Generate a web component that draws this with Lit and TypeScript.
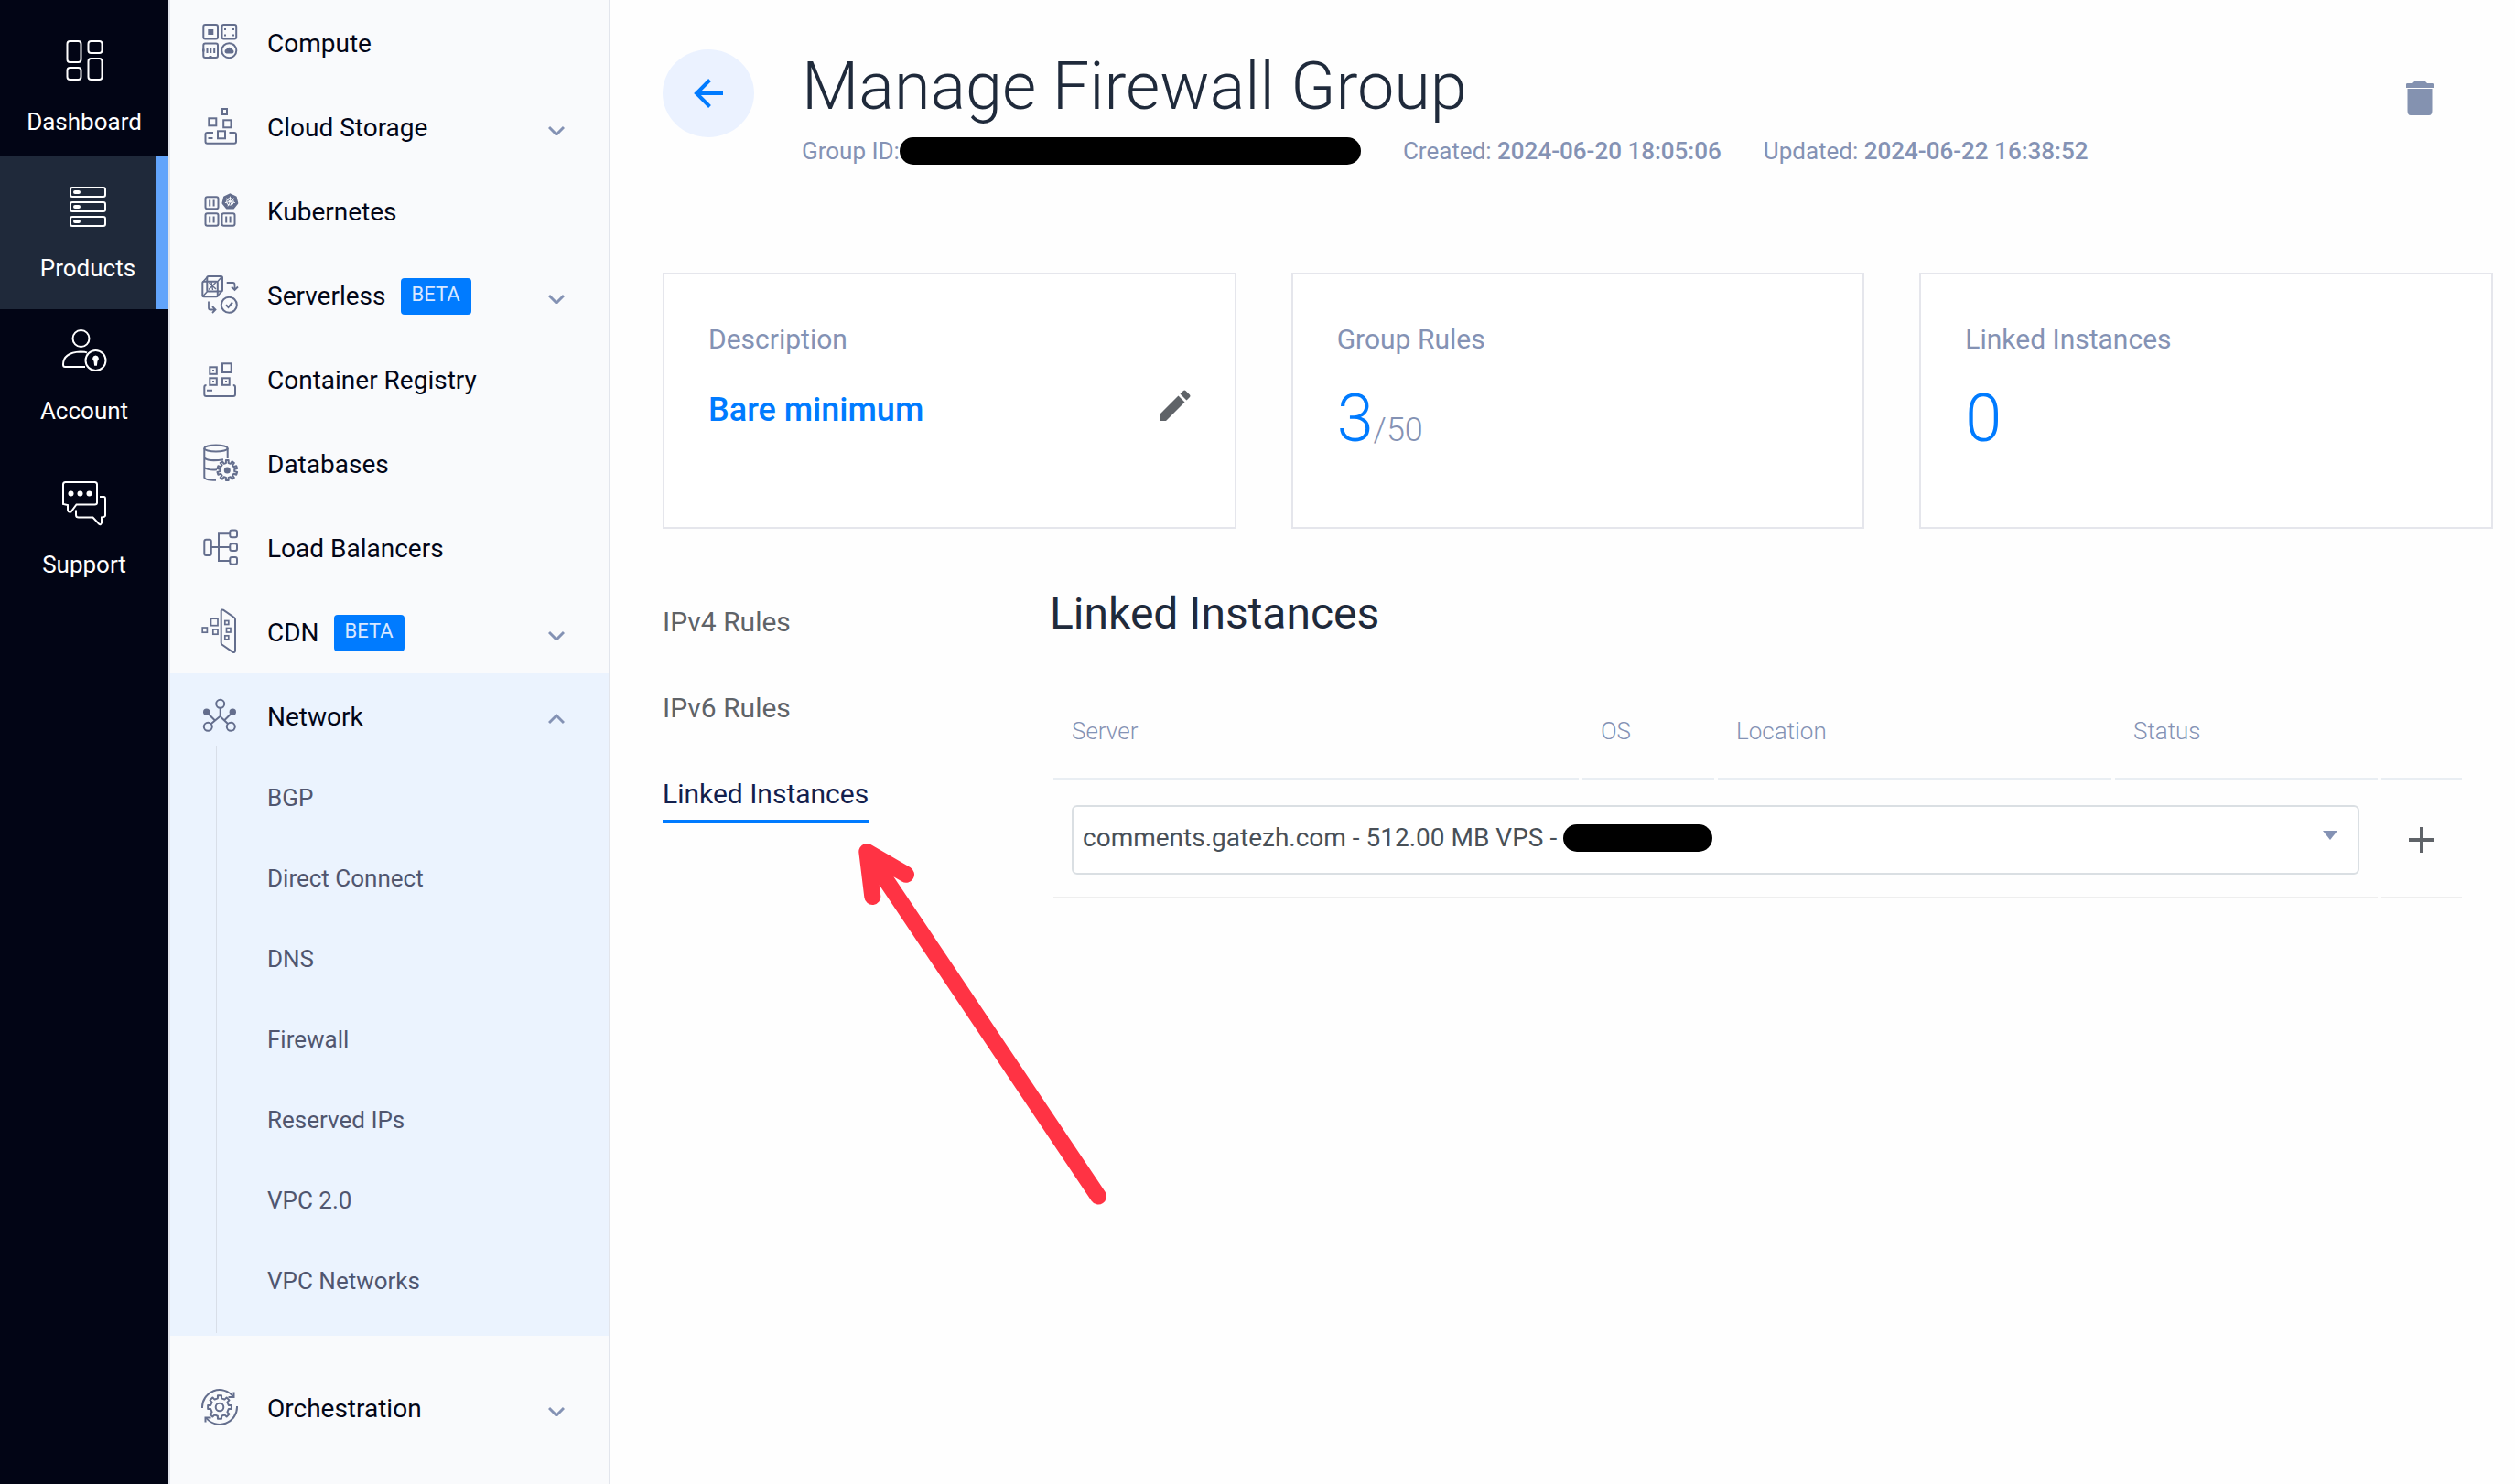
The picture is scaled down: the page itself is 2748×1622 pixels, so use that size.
import { LitElement, html, css, svg, nothing } from "lit";
import { customElement, property } from "lit/decorators.js";
import { classMap } from "lit/directives/class-map.js";

/** Outline of a toothed wheel, as path data. */
function gear(cx: number, cy: number, outer: number, inner: number, teeth: number): string {
  const step = (Math.PI * 2) / teeth;
  const at = (r: number, a: number) =>
    `${(cx + r * Math.sin(a)).toFixed(2)} ${(cy - r * Math.cos(a)).toFixed(2)}`;
  const points: string[] = [];
  for (let i = 0; i < teeth; i++) {
    const a = i * step;
    points.push(
      at(inner, a - step * 0.27),
      at(outer, a - step * 0.2),
      at(outer, a + step * 0.2),
      at(inner, a + step * 0.27),
    );
  }
  return `M${points.join("L")}Z`;
}

const railIcons = {
  dashboard: svg`
    <rect x="5.5" y="3" width="15" height="23" rx="3"/>
    <rect x="28.5" y="3" width="15" height="13" rx="3"/>
    <rect x="5.5" y="32" width="15" height="13" rx="3"/>
    <rect x="28.5" y="22" width="15" height="23" rx="3"/>`,
  products: svg`
    <rect x="5" y="3" width="38" height="10" rx="2"/>
    <rect x="5" y="19" width="38" height="10" rx="2"/>
    <rect x="5" y="35" width="38" height="10" rx="2"/>
    <path d="M10 8h4M10 24h4M10 40h4" stroke-width="4" stroke-linecap="round"/>`,
  account: svg`
    <circle cx="20.500" cy="12" r="9"/>
    <path d="M25 43H3C1.500 43 1 42 1 40.500C1 31 8 27 20 26.500C24 26.600 26 27 27 27.500"/>
    <circle cx="36.500" cy="36" r="11"/>
    <path d="M36.500 30.500a3.500 3.500 0 0 1 2 6.300l-.6 5h-2.800l-.6-5a3.500 3.500 0 0 1 2-6.300z" fill="currentColor" stroke="none"/>`,
  support: svg`
    <path d="M3.500 1H35.500Q38 1 38 3.500V23.500Q38 25.500 35.500 25.500H15.500L9.500 33.500Q6 34 6 31V26L1 25V3.500Q1 1 3.500 1Z"/>
    <path d="M41 17H45.500Q47 17 47 19V37.500Q47 39 43 39.500V45.500Q42 48.500 40 46.500L33.500 39.500H18Q15 39.500 15 37V31.500"/>
    <g fill="currentColor" stroke="none"><circle cx="9.500" cy="13.500" r="3"/><circle cx="19.500" cy="13.500" r="3"/><circle cx="29.500" cy="13.500" r="3"/></g>`,
};

const spokes = Array.from({ length: 7 }, (_, i) => {
  const a = (i * Math.PI * 2) / 7;
  return `M35.400 16.300L${(35.4 + 5.6 * Math.sin(a)).toFixed(2)} ${(16.3 - 5.6 * Math.cos(a)).toFixed(2)}`;
}).join("");

const navIcons = {
  compute: svg`
    <rect x="6.300" y="7" width="15.700" height="15.500" rx="2"/>
    <rect x="26.500" y="7" width="15.700" height="15.500" rx="2"/>
    <rect x="6.300" y="27.500" width="15.700" height="15.500" rx="2"/>
    <ellipse cx="34.300" cy="35.200" rx="8" ry="8"/>
    <path d="M11.300 12h6v6h-6zM29 11h2v2h-2zM38 11h2v2h-2zM29 17.500h2v2h-2zM38 17.500h2v2h-2zM5 33.500h2.500v3H5zM12.500 41h3v3h-3z" fill="currentColor" stroke="none"/>
    <path d="M10.500 32v6M14.300 32v6M18.200 32v6"/>
    <path d="M31.500 38.500a2.400 2.400 0 0 1-.2-4.700 3.400 3.400 0 0 1 6.400.3 2.300 2.300 0 0 1 .3 4.400z" fill="currentColor" stroke="none"/>`,
  storage: svg`
    <rect x="27" y="7" width="5" height="6"/>
    <rect x="12.300" y="17.300" width="8" height="8"/>
    <rect x="28.200" y="19.300" width="8.300" height="8"/>
    <rect x="22" y="31.300" width="8" height="8"/>
    <path d="M17 33H10.500Q8.500 33 8.500 35V42.700Q8.500 44.700 10.500 44.700H40Q42 44.700 42 42.700V35Q42 33 40 33H34.500M11.500 39h5"/>`,
  kubernetes: svg`
    <rect x="8.500" y="11.300" width="14" height="13" rx="2"/>
    <rect x="8.500" y="29.300" width="14" height="13.500" rx="2"/>
    <rect x="26.500" y="29.300" width="14" height="13.500" rx="2"/>
    <path d="M13.200 14.500v7M17.600 14.500v7M13.200 32.500v7M17.600 32.500v7M31.200 32.500v7M35.600 32.500v7"/>
    <path d="M35.400 8.300l6.300 3 1.600 6.800-4.400 5.500h-7l-4.400-5.500 1.600-6.800z" fill="currentColor" stroke="currentColor" stroke-linejoin="round"/>
    <g class="cut"><circle cx="35.400" cy="16.300" r="3.800"/><path d="${spokes}"/></g>`,
  serverless: svg`
    <rect x="5.300" y="11.700" width="16.500" height="16.500" rx="1.500"/>
    <rect x="10.300" y="6" width="16.700" height="16.500" rx="1.500"/>
    <path d="M5.800 12l5-5.500M21.500 12l5-5.500M21.500 27.800l5-5.500M5.800 27.800l5-5.500" stroke-width="1.600"/>
    <path d="M12.500 13l7.500 7M20 12.500l-8 8M15 12l1.500 9" stroke-width="1.400"/>
    <path d="M31.700 13H38.500Q40.500 13 40.500 15V20.500M37 17.500L40.500 21L44 17.500" stroke-width="1.800"/>
    <path d="M12 33.500V40.500Q12 42.500 14 42.500H19M16 39L19.500 42.500L16 46" stroke-width="1.800"/>
    <circle cx="34.300" cy="37.300" r="8.500"/>
    <path d="M31 37.300l2.500 2.700 4.500-5.500"/>`,
  registry: svg`
    <rect x="13.300" y="13.300" width="7.500" height="7.500"/>
    <rect x="27" y="9.300" width="9.700" height="9.700"/>
    <rect x="13.300" y="25.300" width="7.500" height="7.500"/>
    <rect x="27" y="25.300" width="7.700" height="7.500"/>
    <path d="M16 16h2v2h-2zM16 28h2v2h-2zM30 28h2v2h-2z" fill="currentColor" stroke="none"/>
    <path d="M9.500 33Q7.300 33 7.300 35V43Q7.300 45 9.300 45H39Q41 45 41 43V35Q41 33 38.800 33M10 38.700h6"/>`,
  databases: svg`
    <ellipse cx="20" cy="10" rx="12.700" ry="3.500"/>
    <path d="M7.300 10V41.500C7.300 43.500 12 44.800 20 44.800M32.700 10V21M7.300 20.500C10 23 18 24 28 22.200M7.300 31C10 33 16 33.800 21 33.300"/>
    <path d="${gear(32.3, 34, 11, 8, 10)}" stroke-linejoin="round"/>
    <circle cx="32.300" cy="34" r="3.500" fill="currentColor" stroke="none"/>`,
  balancers: svg`
    <rect x="7.300" y="17.700" width="7.500" height="17.300" rx="2"/>
    <rect x="35.300" y="7.500" width="7.700" height="7.700" rx="2"/>
    <rect x="35.300" y="22.200" width="7.700" height="7.700" rx="2"/>
    <rect x="35.300" y="37" width="7.700" height="7.700" rx="2"/>
    <path d="M15 26H35M35 11.300H23V41H35"/>`,
  cdn: svg`
    <path d="M25.700 3.500Q26.200 2 28 2.700L40 11Q41 11.700 41 13V47.500Q40.500 49.700 38.500 48.800L26.500 40.500Q25.700 39.800 25.700 38.500Z"/>
    <g stroke-width="1.700">
      <rect x="5.200" y="22" width="5.200" height="5.200"/>
      <rect x="14.500" y="12.200" width="7.500" height="7.500"/>
      <rect x="16.800" y="24" width="5.200" height="5.200"/>
      <rect x="29.800" y="14.500" width="4" height="4"/>
      <rect x="31.500" y="22.500" width="4.500" height="4.500"/>
      <rect x="29.800" y="30.800" width="4" height="4"/>
    </g>`,
  network: svg`
    <circle cx="24.700" cy="13.300" r="4.500"/>
    <circle cx="11.300" cy="38.300" r="4.500"/>
    <circle cx="36.300" cy="38.300" r="4.500"/>
    <circle cx="9.700" cy="22.300" r="3.700" fill="currentColor" stroke="none"/>
    <circle cx="38.300" cy="22.300" r="3.700" fill="currentColor" stroke="none"/>
    <path d="M24.700 18V26.700L14.800 35M25.500 28L33 35M10 22.500L18.700 31.300M38 22.500L29.500 31"/>`,
  orchestration: svg`
    <path d="${gear(24, 26, 13, 10, 8)}" stroke-linejoin="round"/>
    <circle cx="24" cy="26" r="4.300"/>
    <path d="M5 27A19 19 0 0 1 39 14.500M43 25A19 19 0 0 1 9 37.500"/>
    <path d="M39.500 9.500V15H33.500M8.500 42.500V37.500H14.500"/>`,
};

type NavItem = {
  label: string;
  icon: keyof typeof navIcons;
  beta?: boolean;
  menu?: boolean;
  children?: string[];
};

const navItems: NavItem[] = [
  { label: "Compute", icon: "compute" },
  { label: "Cloud Storage", icon: "storage", menu: true },
  { label: "Kubernetes", icon: "kubernetes" },
  { label: "Serverless", icon: "serverless", beta: true, menu: true },
  { label: "Container Registry", icon: "registry" },
  { label: "Databases", icon: "databases" },
  { label: "Load Balancers", icon: "balancers" },
  { label: "CDN", icon: "cdn", beta: true, menu: true },
  {
    label: "Network",
    icon: "network",
    menu: true,
    children: ["BGP", "Direct Connect", "DNS", "Firewall", "Reserved IPs", "VPC 2.0", "VPC Networks"],
  },
  { label: "Orchestration", icon: "orchestration", menu: true },
];

const reset = css`
  *, *::before, *::after { box-sizing: border-box; }
  ul, h1, h2, p { margin: 0; padding: 0; }
  ul { list-style: none; }
  h1, h2 { font-weight: 400; }
  a { color: inherit; text-decoration: none; }
  svg { display: block; flex: none; }
  button { margin: 0; padding: 0; border: 0; background: none; color: inherit; font: inherit; cursor: pointer; }
`;

@customElement("main-rail")
class MainRail extends LitElement {
  static styles = [reset, css`
    :host { display: block; width: 184px; flex: none; background: #020515; color: #fff; }
    .item {
      display: flex; flex-direction: column; align-items: center; gap: 28px;
      padding: 32px 0 30px; font-size: 26px; line-height: 30px;
    }
    .item.first { padding: 42px 0 22px; }
    .item.active { padding-left: 22px; border-right: 14px solid #62a4fb; background: #1f293a; }
    .item.after { padding-top: 20px; }
    .icon { width: 48px; height: 48px; fill: none; stroke: currentColor; stroke-width: 2; overflow: visible; }
  `];

  render() {
    const items = [
      { label: "Dashboard", icon: railIcons.dashboard, cls: { first: true } },
      { label: "Products", icon: railIcons.products, cls: { active: true } },
      { label: "Account", icon: railIcons.account, cls: { after: true } },
      { label: "Support", icon: railIcons.support, cls: {} },
    ];
    return html`<nav>
      ${items.map((item) => html`
        <a class=${classMap({ item: true, ...item.cls })} href="#">
          <svg class="icon" viewBox="0 0 48 48" aria-hidden="true">${item.icon}</svg>
          <span>${item.label}</span>
        </a>`)}
    </nav>`;
  }
}

@customElement("product-nav")
class ProductNav extends LitElement {
  static styles = [reset, css`
    :host {
      display: block; width: 482px; flex: none; background: #f9fafc; color: #020617;
      border-left: 2px solid #e2e5ec; border-right: 1px solid #e2e5ec;
    }
    .link {
      display: flex; align-items: center; gap: 28px; height: 92px;
      padding: 0 48px 0 30px; font-size: 28px; line-height: 36px;
    }
    .icon { width: 48px; height: 52px; fill: none; stroke: currentColor; stroke-width: 2; color: #646e8d; }
    .cut { stroke: #f9fafc; stroke-width: 1; }
    .label { display: flex; align-items: center; gap: 16px; flex: 1; padding-top: 4px; }
    .badge {
      padding: 0 12px 4px; border-radius: 4px; background: #007bff; color: #d9e8ff;
      font-size: 22px; line-height: 36px;
    }
    .chevron { width: 18px; height: 20px; fill: none; stroke: #8492b4; stroke-width: 3; }
    .open { background: #ebf3fe; padding-bottom: 3px; margin-bottom: 32px; }
    .sub { margin: -13px 0 0 50px; padding: 13px 0; border-left: 1px solid #d8dee8; }
    .child {
      display: block; padding-left: 55px; color: #50566f;
      font-size: 26px; line-height: 88px;
    }
  `];

  render() {
    return html`<nav><ul>${navItems.map((item) => html`
      <li class=${classMap({ open: !!item.children })}>
        <a class="link" href="#">
          <svg class="icon" viewBox="0 0 48 52" aria-hidden="true">${navIcons[item.icon]}</svg>
          <span class="label">
            <span>${item.label}</span>
            ${item.beta ? html`<span class="badge">BETA</span>` : nothing}
          </span>
          ${item.menu
            ? html`<svg class="chevron" viewBox="0 0 18 20" aria-hidden="true">
                <path d=${item.children ? "M1 18L9 10L17 18" : "M1 11L9 19L17 11"}></path>
              </svg>`
            : nothing}
        </a>
        ${item.children
          ? html`<ul class="sub">${item.children.map((c) => html`<li><a class="child" href="#">${c}</a></li>`)}</ul>`
          : nothing}
      </li>`)}</ul></nav>`;
  }
}

@customElement("stat-card")
class StatCard extends LitElement {
  static styles = [reset, css`
    :host { display: block; height: 280px; padding: 53px 48px; border: 2px solid #e5e6ec; background: #fff; }
    .title { color: #8492b4; font-size: 30px; line-height: 36px; margin-bottom: 33px; }
  `];

  @property() label = "";

  render() {
    return html`<p class="title">${this.label}</p><slot></slot>`;
  }
}

@customElement("linked-instances")
class LinkedInstances extends LitElement {
  static styles = [reset, css`
    :host { display: block; flex: 1; min-width: 0; }
    .heading { color: #1f2a3b; font-size: 48px; line-height: 56px; margin-bottom: 45px; }
    .table { width: 100%; table-layout: fixed; border-collapse: separate; border-spacing: 4px; }
    .server { width: 574px; }
    .os { width: 144px; }
    .location { width: 430px; }
    .status { width: 287px; }
    .action { width: 88px; }
    .head {
      padding: 35px 20px; border-bottom: 2px solid #e9eef3; text-align: left;
      color: #8492b4; font-size: 26px; line-height: 32px; font-weight: 300;
    }
    .cell { padding: 24px 20px; border-bottom: 2px solid #eeeeee; }
    .cell.last { padding: 24px 0; }
    .picker { position: relative; }
    .select {
      display: block; width: 100%; height: 76px; padding: 0 80px 4px 10px; appearance: none;
      border: 2px solid #dadfe3; border-radius: 6px; background: #fff;
      color: #495057; font: inherit; font-size: 28px; line-height: 36px;
    }
    .hidden-ip {
      position: absolute; left: 537px; top: 21px; width: 163px; height: 30px;
      border-radius: 15px; background: #000;
    }
    .caret {
      position: absolute; right: 24px; top: 28px; width: 16px; height: 10px; fill: #8492b4;
      pointer-events: none;
    }
    .add { display: block; margin: 0 auto; color: #5f6368; }
    .plus { width: 28px; height: 28px; stroke: currentColor; stroke-width: 4; }
  `];

  render() {
    return html`
      <h2 class="heading">Linked Instances</h2>
      <table class="table">
        <colgroup>
          <col class="server"><col class="os"><col class="location"><col class="status"><col class="action">
        </colgroup>
        <thead><tr>
          <th class="head">Server</th><th class="head">OS</th><th class="head">Location</th>
          <th class="head">Status</th><th class="head"></th>
        </tr></thead>
        <tbody><tr>
          <td class="cell" colspan="4">
            <div class="picker">
              <select class="select" aria-label="Server to link">
                <option>comments.gatezh.com - 512.00 MB VPS -</option>
              </select>
              <span class="hidden-ip"></span>
              <svg class="caret" viewBox="0 0 16 10" aria-hidden="true"><path d="M0 0H16L8 10Z"/></svg>
            </div>
          </td>
          <td class="cell last">
            <button class="add" aria-label="Link instance">
              <svg class="plus" viewBox="0 0 28 28" aria-hidden="true"><path d="M14 0V28M0 14H28"/></svg>
            </button>
          </td>
        </tr></tbody>
      </table>`;
  }
}

@customElement("app-root")
class AppRoot extends LitElement {
  static styles = [reset, css`
    :host {
      display: flex; min-height: 100vh; background: #fefefe;
      font-family: Roboto, "Liberation Sans", sans-serif;
    }
    .main { flex: 1; min-width: 0; padding: 54px 24px 0 58px; }
    .header { display: flex; align-items: flex-start; gap: 52px; }
    .back {
      display: grid; place-items: center; width: 100px; height: 96px; flex: none;
      border-radius: 50%; background: #ebf2ff;
    }
    .arrow { width: 32px; height: 32px; fill: none; stroke: #007bff; stroke-width: 4; }
    .titles { flex: 1; }
    .title { color: #1f2a3b; font-size: 72px; line-height: 82px; font-weight: 300; margin-bottom: 13px; }
    .meta { display: flex; gap: 46px; color: #8492b4; font-size: 26px; line-height: 32px; }
    .group { display: flex; align-items: center; }
    .hidden-id { width: 504px; height: 30px; border-radius: 15px; background: #000; }
    .strong { font-weight: 500; }
    .delete { margin: 33px 60px 0 0; }
    .trash { width: 40px; height: 40px; fill: #8492b0; }
    .cards { display: grid; grid-template-columns: repeat(3, 1fr); gap: 60px; margin-top: 117px; }
    .description { display: flex; justify-content: space-between; align-items: flex-start; }
    .name { color: #007bff; font-size: 36px; line-height: 52px; font-weight: 500; }
    .edit { padding-top: 4px; }
    .pencil { width: 34px; height: 34px; fill: #5f6368; }
    .number { color: #007bff; font-size: 72px; line-height: 72px; font-weight: 300; }
    .limit { color: #8492b4; font-size: 36px; }
    .body { display: flex; position: relative; margin: 65px 30px 0 0; }
    .tabs { display: flex; flex-direction: column; align-items: flex-start; gap: 58px; width: 423px; flex: none; padding-top: 19px; }
    .tab { color: #5f6368; font-size: 30px; line-height: 36px; }
    .tab.active { color: #13204d; padding-bottom: 10px; border-bottom: 4px solid #007bff; }
    .pointer {
      position: absolute; left: 214px; top: 278px; width: 272px; height: 397px; pointer-events: none;
      fill: none; stroke: #ff3344; stroke-width: 18; stroke-linecap: round; stroke-linejoin: round;
    }
  `];

  render() {
    return html`
      <main-rail></main-rail>
      <product-nav></product-nav>
      <main class="main">
        <header class="header">
          <a class="back" href="#" aria-label="Back">
            <svg class="arrow" viewBox="0 0 32 32" aria-hidden="true"><path d="M32 16H3M17.500 1.500L3 16L17.500 30.500"/></svg>
          </a>
          <div class="titles">
            <h1 class="title">Manage Firewall Group</h1>
            <div class="meta">
              <span class="group">Group ID:<span class="hidden-id"></span></span>
              <span>Created: <span class="strong">2024-06-20 18:05:06</span></span>
              <span>Updated: <span class="strong">2024-06-22 16:38:52</span></span>
            </div>
          </div>
          <button class="delete" aria-label="Delete firewall group">
            <svg class="trash" viewBox="0 0 40 40" aria-hidden="true">
              <path d="M5 5Q5 4 6.500 4H12L14 2H26L28 4H33.500Q35 4 35 5V9H5ZM6.500 10H33.500V34Q33.500 39 30 39H10Q6.500 39 6.500 34Z"/>
            </svg>
          </button>
        </header>
        <section class="cards">
          <stat-card label="Description">
            <div class="description">
              <span class="name">Bare minimum</span>
              <button class="edit" aria-label="Edit description">
                <svg class="pencil" viewBox="0 0 34 34" aria-hidden="true">
                  <path d="M0 27L20.500 6.500L27.500 13.500L7 34H0ZM22.500 4.500L26 1Q27.300 0 28.500 1L33 5.500Q34 6.800 33 8L29.500 11.500Z"/>
                </svg>
              </button>
            </div>
          </stat-card>
          <stat-card label="Group Rules">
            <div class="number">3<span class="limit">/50</span></div>
          </stat-card>
          <stat-card label="Linked Instances"><div class="number">0</div></stat-card>
        </section>
        <div class="body">
          <nav class="tabs">
            <a class="tab" href="#">IPv4 Rules</a>
            <a class="tab" href="#">IPv6 Rules</a>
            <a class="tab active" href="#">Linked Instances</a>
          </nav>
          <linked-instances></linked-instances>
          <svg class="pointer" viewBox="0 0 272 397" aria-hidden="true">
            <path d="M262 386.500L9.300 10M52 34.700L9.300 10L15.300 59"/>
          </svg>
        </div>
      </main>`;
  }
}
